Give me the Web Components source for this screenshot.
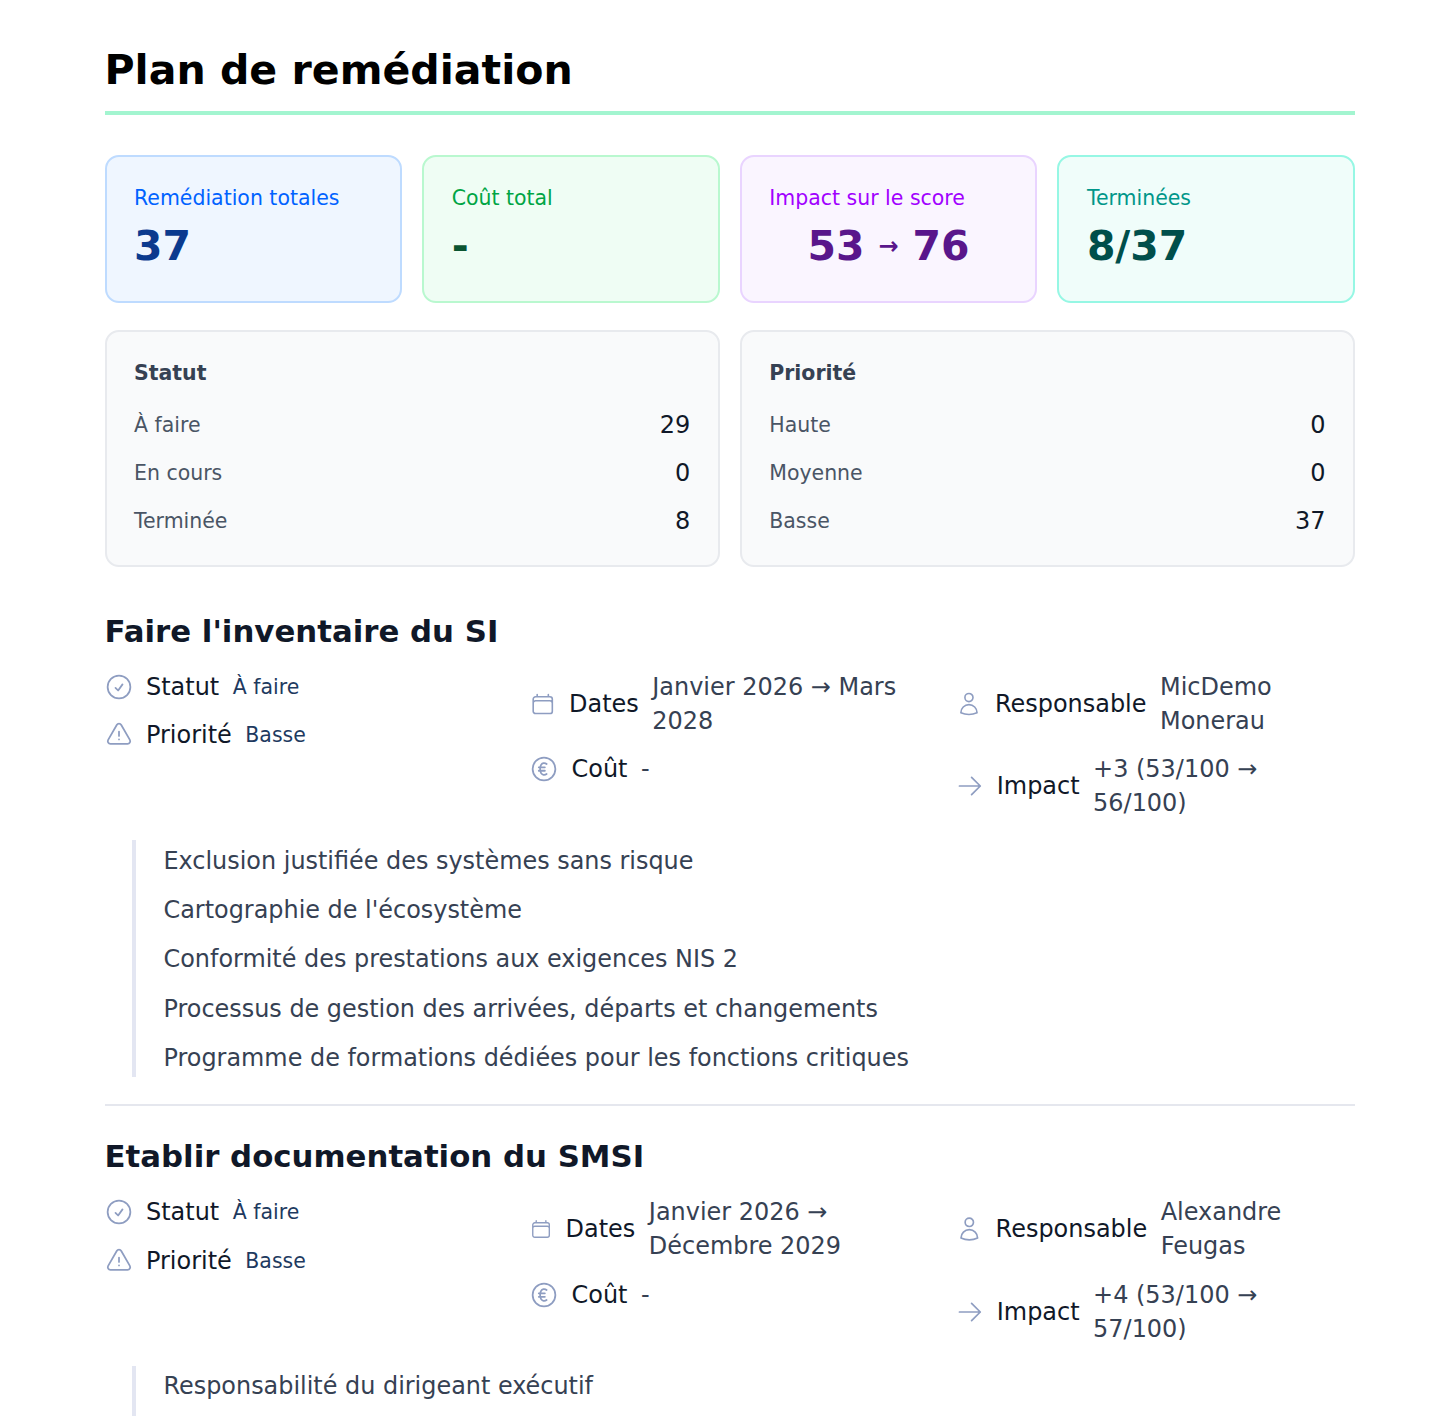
<!DOCTYPE html>
<html lang="fr"><head><meta charset="utf-8"><title>Plan de remédiation</title>
<style>
html,body{margin:0;padding:0;background:#fff;height:1416px;overflow:hidden}
body{font-family:"DejaVu Sans",sans-serif;color:#101828}
</style></head><body>
<plan-page>
  <h1 slot="title">Plan de remédiation</h1>
  <stat-card tone="blue" label="Remédiation totales">37</stat-card>
  <stat-card tone="green" label="Coût total">-</stat-card>
  <stat-card tone="purple" label="Impact sur le score" center>53<small>→</small>76</stat-card>
  <stat-card tone="teal" label="Terminées">8/37</stat-card>
  <count-panel slot="panels" heading="Statut" rows="À faire:29|En cours:0|Terminée:8"></count-panel>
  <count-panel slot="panels" heading="Priorité" rows="Haute:0|Moyenne:0|Basse:37"></count-panel>
  <plan-item slot="items" heading="Faire l'inventaire du SI" dates="Janvier 2026 → Mars 2028" owner="MicDemo Monerau" impact="+3 (53/100 → 56/100)" items="Exclusion justifiée des systèmes sans risque|Cartographie de l'écosystème|Conformité des prestations aux exigences NIS 2|Processus de gestion des arrivées, départs et changements|Programme de formations dédiées pour les fonctions critiques" divider></plan-item>
  <plan-item slot="items" heading="Etablir documentation du SMSI" dates="Janvier 2026 → Décembre 2029" owner="Alexandre Feugas" impact="+4 (53/100 → 57/100)" items="Responsabilité du dirigeant exécutif|&nbsp;"></plan-item>
</plan-page>
<script>
const ICONS={
check:'<circle cx="12" cy="12" r="9.75"/><path d="M9 12.75 11.25 15 15 9.75"/>',
warn:'<path d="M12 9v3.75m-9.303 3.376c-.866 1.5.217 3.374 1.948 3.374h14.71c1.73 0 2.813-1.874 1.948-3.374L13.949 3.378c-.866-1.5-3.032-1.5-3.898 0L2.697 16.126ZM12 15.75h.007v.008H12v-.008Z"/>',
cal:'<path d="M6.75 3v2.25M17.25 3v2.25M3 18.75V7.5a2.25 2.25 0 0 1 2.25-2.25h13.5A2.25 2.25 0 0 1 21 7.5v11.25m-18 0A2.25 2.25 0 0 0 5.25 21h13.5A2.25 2.25 0 0 0 21 18.75m-18 0v-7.5A2.25 2.25 0 0 1 5.25 9h13.5A2.25 2.25 0 0 1 21 11.25v7.5"/>',
euro:'<circle cx="12" cy="12" r="9.75"/><path d="M14.25 7.76c-1.7-1.3-3.9-.9-4.9.9-.9 1.6-.9 5 0 6.7 1 1.8 3.2 2.2 4.9.9M7.5 10.5h5.25M7.5 13.5h5.25"/>',
user:'<path d="M15.75 6a3.75 3.75 0 1 1-7.5 0 3.75 3.75 0 0 1 7.5 0ZM4.5 20.12a7.5 7.5 0 0 1 15 0A17.93 17.93 0 0 1 12 21.75c-2.68 0-5.22-.58-7.5-1.63Z"/>',
arrow:'<path d="M13.5 4.5 21 12m0 0-7.5 7.5M21 12H3"/>'};
function icon(n,w=28){return `<svg class="ic" width="${w}" height="${w}" viewBox="0 0 24 24" fill="none" stroke="currentColor" stroke-width="1.5" stroke-linecap="round" stroke-linejoin="round" aria-hidden="true">${ICONS[n]}</svg>`}
function shadow(el,html){el.attachShadow({mode:'open'}).innerHTML=html}

customElements.define('plan-page',class extends HTMLElement{constructor(){super();shadow(this,`<style>
:host{display:block;box-sizing:border-box;width:1250.5px;margin:0 0 0 104.5px;padding-top:42px}
.title{border-bottom:4px solid #a3f5d0;padding-bottom:13px;margin-bottom:40px}
::slotted(h1){margin:0;font:700 41.08px/56px "DejaVu Sans",sans-serif;color:#000}
.cards{display:grid;grid-template-columns:repeat(4,1fr);gap:20px;margin-bottom:27px}
.panels{display:grid;grid-template-columns:repeat(2,1fr);gap:20px;margin-bottom:42px}
</style><div class="title"><slot name="title"></slot></div><div class="cards"><slot></slot></div><div class="panels"><slot name="panels"></slot></div><slot name="items"></slot>`)}});

const TONES={
blue:['#eff6ff','#bedbff','#0062ff','#0b3a8e'],
green:['#effdf4','#b9f8cf','#00a544','#0a5430'],
purple:['#faf5ff','#e9d4ff','#a100ff','#59168b'],
teal:['#f0fdfa','#96f7e4','#009689','#004f4b']};
customElements.define('stat-card',class extends HTMLElement{connectedCallback(){if(this.shadowRoot)return;const t=TONES[this.getAttribute('tone')];shadow(this,`<style>
:host{display:block;box-sizing:border-box;height:148px;padding:27.5px;background:${t[0]};border:2px solid ${t[1]};border-radius:14px}
.l{font-size:20.48px;line-height:27px;color:${t[2]};white-space:nowrap}
.v{font-weight:700;font-size:40.96px;line-height:56px;margin-top:6px;color:${t[3]};display:flex;align-items:center;${this.hasAttribute('center')?'justify-content:center;gap:14px;':''}}
::slotted(small){font-size:24px}
</style><div class="l">${this.getAttribute('label')}</div><div class="v"><slot></slot></div>`)}});

customElements.define('count-panel',class extends HTMLElement{connectedCallback(){if(this.shadowRoot)return;const rows=this.getAttribute('rows').split('|').map(r=>{const[a,b]=r.split(':');return `<div class="r"><span>${a}</span><b>${b}</b></div>`}).join('');shadow(this,`<style>
:host{display:block;box-sizing:border-box;height:237px;padding:27px 27.5px;background:#f9fafb;border:2px solid #e8eaee;border-radius:14px}
h3{margin:0 0 14px;font:700 20.48px/28px "DejaVu Sans",sans-serif;color:#364153}
.r{display:flex;justify-content:space-between;align-items:center;height:48px;font-size:20.48px;color:#4a5565}
b{font-weight:400;font-size:24px;color:#101828}
</style><h3>${this.getAttribute('heading')}</h3>${rows}`)}});

customElements.define('meta-row',class extends HTMLElement{connectedCallback(){if(this.shadowRoot)return;const small=this.hasAttribute('badge');shadow(this,`<style>
:host{display:flex;align-items:center;gap:13.5px;min-width:0}
.ic{flex:0 1 28px;color:#8e9dc1;min-width:0}
.k{color:#101828;font-size:23.96px;line-height:34px;white-space:nowrap}
.t{display:flex;align-items:center;gap:13.5px;min-width:0}
.v{color:${small?'#1e3a5f':'#364153'};font-size:${small?'20.48px':'23.96px'};line-height:34px}
</style>${icon(this.getAttribute('icon'))}<span class="t"><span class="k">${this.getAttribute('k')}</span><span class="v">${this.getAttribute('v')}</span></span>`)}});

customElements.define('plan-item',class extends HTMLElement{connectedCallback(){if(this.shadowRoot)return;const g=n=>this.getAttribute(n);
shadow(this,`<style>
:host{display:block}
h2{margin:0 0 17px;font:700 30.8px/44px "DejaVu Sans",sans-serif;color:#101828}
.grid{display:grid;grid-template-columns:repeat(3,1fr);column-gap:26px;margin-bottom:20px}
.col{display:flex;flex-direction:column;gap:14.4px;min-width:0}
ul{list-style:none;margin:0 0 0 27.5px;padding:3.5px 0 2.5px 27.5px;border-left:4px solid #e3e6f2;display:flex;flex-direction:column;gap:15.25px}
li{font-size:23.92px;line-height:34px;color:#364153}
.div{border-bottom:2px solid #e5e7ee;margin:27px 0 28px}
</style><h2>${g('heading')}</h2><div class="grid">
<div class="col"><meta-row icon="check" k="Statut" v="À faire" badge></meta-row><meta-row icon="warn" k="Priorité" v="Basse" badge></meta-row></div>
<div class="col"><meta-row icon="cal" k="Dates" v="${g('dates')}"></meta-row><meta-row icon="euro" k="Coût" v="-"></meta-row></div>
<div class="col"><meta-row icon="user" k="Responsable" v="${g('owner')}"></meta-row><meta-row icon="arrow" k="Impact" v="${g('impact')}"></meta-row></div>
</div><ul>${g('items').split('|').map(s=>`<li>${s}</li>`).join('')}</ul>${this.hasAttribute('divider')?'<div class="div"></div>':''}`)}});
</script>
</body></html>
